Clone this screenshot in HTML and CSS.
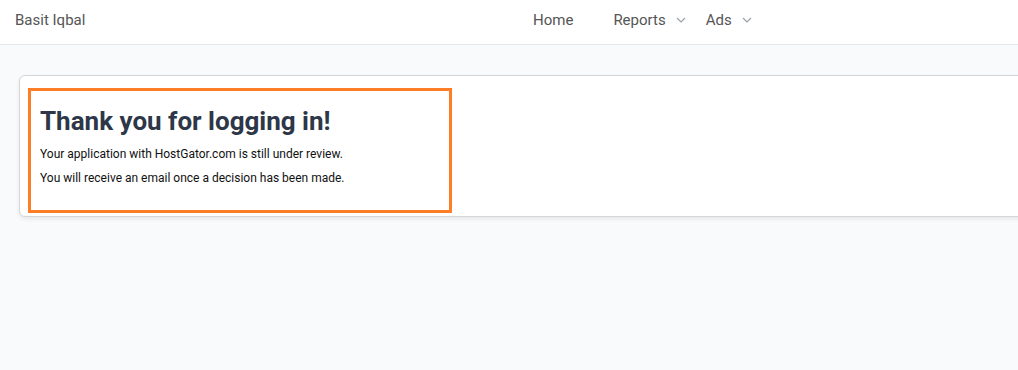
FILE: index.html
```html
<!DOCTYPE html>
<html lang="en">
<head>
    <meta charset="UTF-8">
    <meta name="viewport" content="width=device-width, initial-scale=1.0">
    <title>Thank you</title>
    <link rel="stylesheet" href="styles.css">
</head>
<body>
    <!-- Top navigation -->
    <header class="topbar">
        <div class="brand">Basit Iqbal</div>
        <nav class="menu">
            <a class="menu-item" href="#">Home</a>
            <a class="menu-item has-caret" href="#">Reports
                <svg class="caret" width="10" height="6" viewBox="0 0 10 6"><path d="M1 1l4 4 4-4" fill="none" stroke="#9aa0a6" stroke-width="1.2"/></svg>
            </a>
            <a class="menu-item has-caret" href="#">Ads
                <svg class="caret" width="10" height="6" viewBox="0 0 10 6"><path d="M1 1l4 4 4-4" fill="none" stroke="#9aa0a6" stroke-width="1.2"/></svg>
            </a>
        </nav>
    </header>

    <main class="content">
        <div class="card">
            <div class="notice">
                <h1>Thank you for logging in!</h1>
                <p>Your application with HostGator.com is still under review.</p>
                <p>You will receive an email once a decision has been made.</p>
            </div>
        </div>
    </main>
</body>
</html>
```

FILE: styles.css
```css
html, body {
    margin: 0;
    padding: 0;
}
body {
    font-family: Roboto, "Liberation Sans", sans-serif;
    background-color: #f9fafc;
    overflow-x: hidden;
    height: 370px;
}
.topbar {
    display: flex;
    align-items: center;
    height: 45px;
    box-sizing: border-box;
    padding: 0 15px 5px;
    background-color: #fff;
    border-bottom: 1px solid #e5e7eb;
}
.brand {
    font-size: 15px;
    color: #555;
    width: 518px;
}
.menu {
    display: flex;
    align-items: center;
    gap: 40px;
}
.menu-item {
    font-size: 15px;
    color: #555;
    text-decoration: none;
    display: flex;
    align-items: center;
}
.has-caret {
    gap: 10px;
}
.menu-item.has-caret + .menu-item {
    margin-left: -20px;
}
.content {
    padding: 30px 0 0 19px;
}
.card {
    width: 1010px;
    background-color: #fff;
    border: 1px solid #d6d6d6;
    border-radius: 6px;
    box-shadow: 0 2px 4px rgba(0, 0, 0, 0.08);
    padding: 12px 8px 3px;
}
.notice {
    box-sizing: border-box;
    width: 424px;
    border: 3px solid #fd7e27;
    padding: 15px 9px 15px;
}
.notice h1 {
    margin: 0 0 11px;
    font-size: 26px;
    font-weight: 700;
    color: #2d3748;
}
.notice p {
    margin: 0 0 10px;
    font-size: 12px;
    color: #111;
}
```
